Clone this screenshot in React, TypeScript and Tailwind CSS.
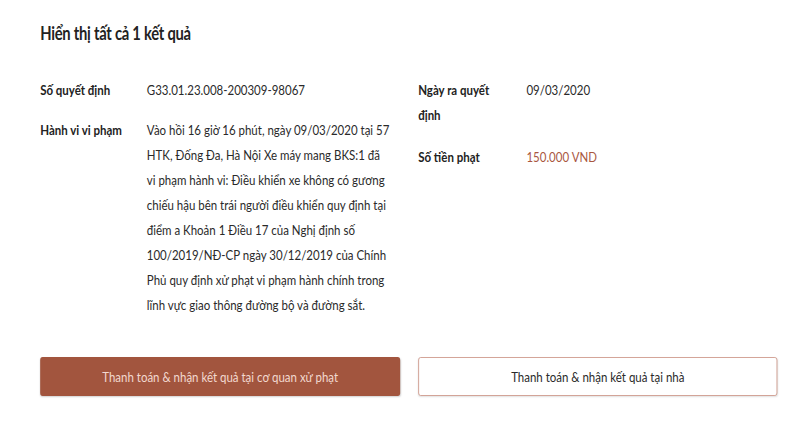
export default function App() {
  return (
    <div
      className="w-[799px] h-[441px] bg-white text-[#2a2a2a] overflow-hidden"
      style={{ fontFamily: 'Lato, "Noto Sans", sans-serif' }}
    >
      {/* the source is rendered a little wider and squeezed horizontally */}
      <div className="w-[974px] origin-top-left scale-x-[0.82] pl-[49px] pr-[27px] pt-[21px]">
        <h2 className="text-[18px] font-bold leading-[24px] tracking-[-0.3px] text-[#222]">
          Hiển thị tất cả 1 kết quả
        </h2>

        <div className="mt-[32px] grid grid-cols-[439px_438px] gap-x-[22px] text-[14px] leading-[25px]">
          {/* Left column */}
          <div className="flex flex-col gap-[15px]">
            <div className="flex">
              <div className="w-[130px] shrink-0 font-bold text-[#222]">Số quyết định</div>
              <div>G33.01.23.008-200309-98067</div>
            </div>
            <div className="flex">
              <div className="w-[130px] shrink-0 font-bold text-[#222]">Hành vi vi phạm</div>
              <div className="w-[305px]">
                Vào hồi 16 giờ 16 phút, ngày 09/03/2020 tại 57 HTK, Đống Đa, Hà Nội Xe máy mang BKS:1 đã
                vi{'\u00a0'}phạm hành vi: Điều khiển xe không có gương chiếu hậu bên trái người điều khiển quy định
                tại điểm a Khoản 1 Điều 17 của Nghị định số 100/2019/NĐ-CP ngày 30/12/2019 của Chính Phủ
                quy định xử phạt vi phạm hành chính trong lĩnh vực giao thông đường bộ và đường sắt.
              </div>
            </div>
          </div>

          {/* Right column */}
          <div className="flex flex-col gap-[17px]">
            <div className="flex">
              <div className="w-[132px] shrink-0 pr-[30px] font-bold text-[#222]">Ngày ra quyết định</div>
              <div>09/03/2020</div>
            </div>
            <div className="flex">
              <div className="w-[132px] shrink-0 font-bold text-[#222]">Số tiền phạt</div>
              <div className="text-[#a9573f]">150.000 VND</div>
            </div>
          </div>
        </div>

        <div className="mt-[40px] grid grid-cols-[439px_438px] gap-x-[22px] text-[14px]">
          <button className="h-[39px] rounded-[3px] bg-[#a2553e] text-[#f2d9d0] shadow-[0_1px_2px_rgba(0,0,0,0.18)]">
            Thanh toán &amp; nhận kết quả tại cơ quan xử phạt
          </button>
          <button className="h-[39px] rounded-[3px] border border-[#d09c8e] bg-white text-[#2a2a2a] shadow-[0_1px_2px_rgba(0,0,0,0.12)]">
            Thanh toán &amp; nhận kết quả tại nhà
          </button>
        </div>
      </div>
    </div>
  )
}
